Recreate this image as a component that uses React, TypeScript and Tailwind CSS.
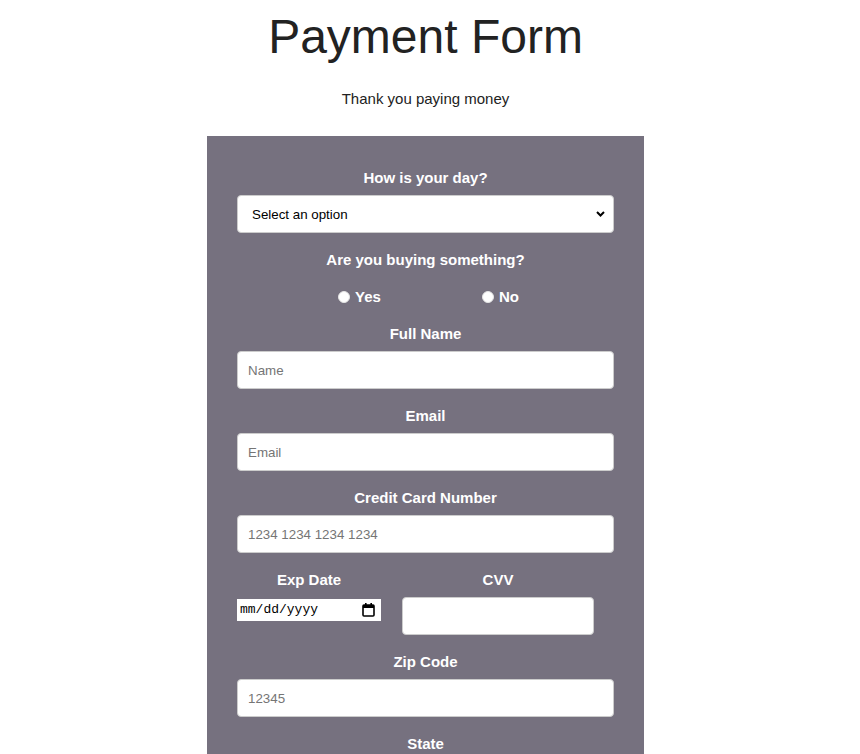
import React from "react";

const labelCls = "block text-center text-white font-bold text-[15px] leading-[18px]";
const inputCls =
  "block w-full h-[38px] bg-white border border-[#cccccc] rounded-[4px] px-[10px] text-[13.33px] text-black placeholder:text-[#757575] outline-none";

function Chevron() {
  return (
    <svg width="9" height="6" viewBox="0 0 9 6" fill="none">
      <path d="M1 1l3.5 3.5L8 1" stroke="#000" strokeWidth="2" />
    </svg>
  );
}

function CalendarIcon() {
  return (
    <svg width="13" height="14" viewBox="0 0 13 14" fill="none">
      <rect x="1" y="2" width="11" height="11" rx="1" stroke="#000" strokeWidth="1.6" />
      <rect x="1" y="2" width="11" height="3" fill="#000" />
      <rect x="3" y="0" width="1.6" height="3" fill="#000" />
      <rect x="8.4" y="0" width="1.6" height="3" fill="#000" />
    </svg>
  );
}

function Radio({ label }: { label: string }) {
  return (
    <label className="flex items-center gap-[5px]">
      <span className="w-[12px] h-[12px] rounded-full bg-white border border-[#e5e5e5]" />
      <span className="text-white font-bold text-[15px] leading-[18px]">{label}</span>
    </label>
  );
}

export default function App() {
  return (
    <div className="h-screen overflow-hidden bg-white" style={{ fontFamily: '"Liberation Sans", Arial, sans-serif' }}>
      <div className="w-[851px] flex flex-col items-center">
        <h1 className="mt-[9px] text-[48px] leading-[56px] text-[#222222] font-normal">Payment Form</h1>
        <p className="mt-[25px] text-[15px] leading-[18px] text-[#222222]">Thank you paying money</p>

        <form className="mt-[28px] w-[437px] bg-[#76717f] px-[30px] pt-[33px] pb-[30px]">
          <label className={labelCls}>How is your day?</label>
          <div className="mt-[8px] h-[38px] bg-white border border-[#cccccc] rounded-[4px] pl-[14px] pr-[8px] flex items-center justify-between">
            <span className="text-[13.33px] text-black pt-[2px]">Select an option</span>
            <Chevron />
          </div>

          <label className={`${labelCls} mt-[18px]`}>Are you buying something?</label>
          <div className="mt-[19px] h-[18px] flex justify-center gap-[101px] pl-[6px]">
            <Radio label="Yes" />
            <Radio label="No" />
          </div>

          <label className={`${labelCls} mt-[18px] pt-[1px]`}>Full Name</label>
          <input className={`${inputCls} mt-[8px]`} placeholder="Name" />

          <label className={`${labelCls} mt-[17px] pt-[1px]`}>Email</label>
          <input className={`${inputCls} mt-[8px]`} placeholder="Email" />

          <label className={`${labelCls} mt-[17px] pt-[1px]`}>Credit Card Number</label>
          <input className={`${inputCls} mt-[8px]`} placeholder="1234 1234 1234 1234" />

          <div className="mt-[17px] flex items-start gap-[21px]">
            <div className="w-[144px]">
              <label className={`${labelCls} pt-[1px]`}>Exp Date</label>
              <div className="mt-[10px] h-[22px] bg-white flex items-center justify-between pl-[3px] pr-[6px]">
                <span className="text-[13px] leading-[16px] text-black" style={{ fontFamily: '"Liberation Mono", monospace' }}>
                  mm/dd/yyyy
                </span>
                <CalendarIcon />
              </div>
            </div>
            <div className="w-[192px]">
              <label className={`${labelCls} pt-[1px]`}>CVV</label>
              <input className={`${inputCls} mt-[8px]`} />
            </div>
          </div>

          <label className={`${labelCls} mt-[17px] pt-[1px]`}>Zip Code</label>
          <input className={`${inputCls} mt-[8px]`} placeholder="12345" />

          <label className={`${labelCls} mt-[17px] pt-[1px]`}>State</label>
          <div className="mt-[8px] h-[38px] bg-white border border-[#cccccc] rounded-[4px]" />
        </form>
      </div>
    </div>
  );
}
